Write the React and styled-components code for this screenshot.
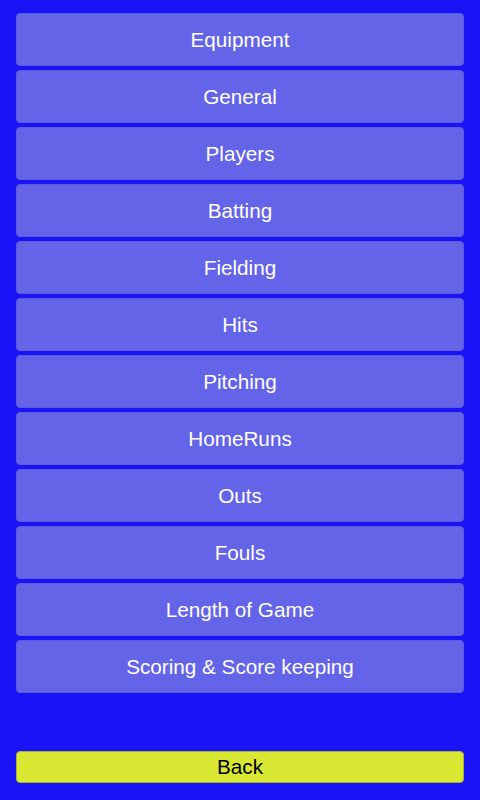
import React from 'react';
import styled, { createGlobalStyle } from 'styled-components';

const GlobalStyle = createGlobalStyle`
  html, body {
    margin: 0;
    padding: 0;
    background: #1a13f5;
  }
  * {
    box-sizing: border-box;
  }
`;

const Screen = styled.div`
  width: 480px;
  height: 800px;
  background: #1a13f5;
  display: flex;
  flex-direction: column;
  padding: 13px 16px 17px 16px;
  font-family: "Liberation Sans", Arial, sans-serif;
`;

const MenuList = styled.div`
  display: flex;
  flex-direction: column;
  gap: 4px;
  flex: 1;
`;

const MenuButton = styled.button`
  height: 53px;
  width: 100%;
  background: #6464e8;
  border: 1px solid #5c5cd8;
  border-radius: 4px;
  color: #ffffff;
  font-family: inherit;
  font-size: 20.7px;
  display: flex;
  align-items: center;
  justify-content: center;
  padding: 1px 0 0 0;
  cursor: pointer;
`;

const BackButton = styled.button`
  height: 32px;
  width: 100%;
  background: #d9e832;
  border: 1px solid #a8b428;
  border-radius: 4px;
  color: #000000;
  font-family: inherit;
  font-size: 20.7px;
  padding: 0;
  cursor: pointer;
`;

const topics = [
  'Equipment',
  'General',
  'Players',
  'Batting',
  'Fielding',
  'Hits',
  'Pitching',
  'HomeRuns',
  'Outs',
  'Fouls',
  'Length of Game',
  'Scoring & Score keeping',
];

const App = () => (
  <>
    <GlobalStyle />
    <Screen>
      <MenuList>
        {topics.map(topic => (
          <MenuButton key={topic}>{topic}</MenuButton>
        ))}
      </MenuList>
      <BackButton>Back</BackButton>
    </Screen>
  </>
);

export default App;
